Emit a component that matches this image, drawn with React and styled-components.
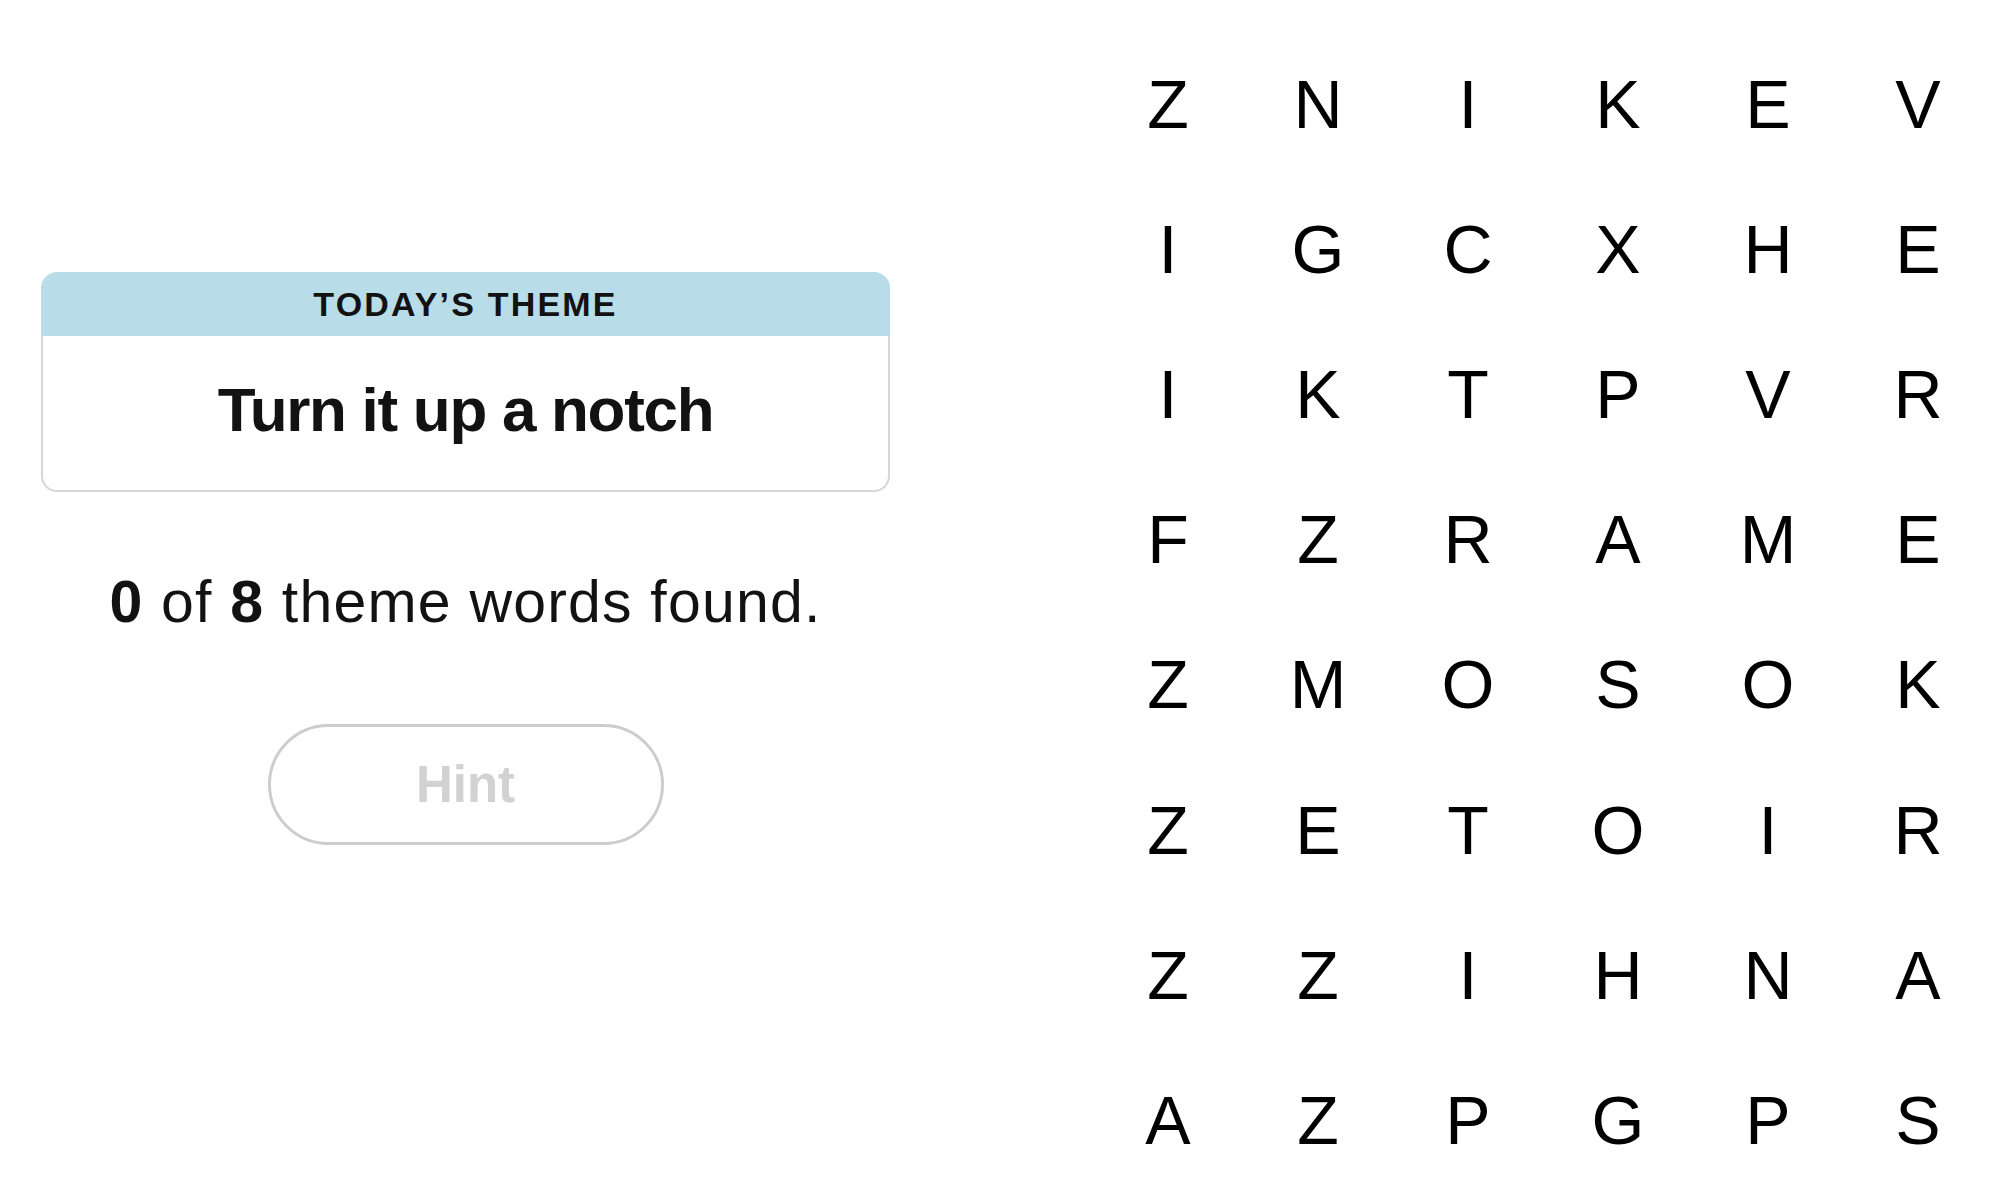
import React from "react";
import styled, { createGlobalStyle } from "styled-components";

const GlobalStyle = createGlobalStyle`
  html, body {
    margin: 0;
    padding: 0;
    background: #ffffff;
  }
  body {
    font-family: "Liberation Sans", Arial, sans-serif;
    color: #121212;
  }
`;

const LETTERS = [
  "ZNIKEV",
  "IGCXHE",
  "IKTPVR",
  "FZRAME",
  "ZMOSOK",
  "ZETOIR",
  "ZZIHNA",
  "AZPGPS",
];

export default function App() {
  return (
    <>
      <GlobalStyle />
      <Page>
        <Sidebar>
          <ThemeCard>
            <ThemeHeader>TODAY’S THEME</ThemeHeader>
            <ThemeBody>Turn it up a notch</ThemeBody>
          </ThemeCard>
          <Progress>
            <b>0</b> of <b>8</b> theme words found.
          </Progress>
          <HintButton disabled>Hint</HintButton>
        </Sidebar>
        <Board>
          {LETTERS.map((row, r) =>
            row.split("").map((ch, c) => <Cell key={`${r}-${c}`}>{ch}</Cell>)
          )}
        </Board>
      </Page>
    </>
  );
}

const Page = styled.div`
  display: flex;
  align-items: flex-start;
  gap: 203px;
  padding: 31px 0 0 41px;
  height: 1202px;
  box-sizing: border-box;
  overflow: hidden;
`;

const Sidebar = styled.div`
  width: 849px;
  padding-top: 241px;
  display: flex;
  flex-direction: column;
  align-items: center;
`;

const ThemeCard = styled.div`
  width: 100%;
  display: flex;
  flex-direction: column;
`;

const ThemeHeader = styled.div`
  height: 64px;
  background: #b8dce8;
  border-radius: 16px 16px 0 0;
  display: flex;
  align-items: center;
  justify-content: center;
  font-size: 34px;
  font-weight: 700;
  letter-spacing: 2.2px;
  line-height: 1;
  color: #121212;
`;

const ThemeBody = styled.div`
  height: 156px;
  box-sizing: border-box;
  border: 2px solid #d6d6d6;
  border-top: none;
  border-radius: 0 0 16px 16px;
  display: flex;
  align-items: center;
  justify-content: center;
  padding-bottom: 6px;
  font-size: 62px;
  font-weight: 700;
  letter-spacing: -1.3px;
  line-height: 1;
  color: #121212;
`;

const Progress = styled.p`
  margin: 81px 0 0;
  font-size: 59px;
  line-height: 59px;
  letter-spacing: 1.2px;
  font-weight: 400;
  color: #121212;
  white-space: nowrap;

  b {
    font-weight: 700;
  }
`;

const HintButton = styled.button`
  margin-top: 92px;
  width: 396px;
  height: 121px;
  border: 3px solid #cdcdcd;
  border-radius: 61px;
  background: #ffffff;
  font-family: "Liberation Sans", Arial, sans-serif;
  font-size: 51px;
  font-weight: 700;
  line-height: 1;
  color: #d2d2d2;
  cursor: default;
  display: flex;
  align-items: center;
  justify-content: center;
  padding: 0;
`;

const Board = styled.div`
  display: grid;
  grid-template-columns: repeat(6, 150px);
  grid-auto-rows: 145.2px;
`;

const Cell = styled.div`
  display: flex;
  align-items: center;
  justify-content: center;
  font-size: 68px;
  line-height: 1;
  font-weight: 400;
  color: #000000;
  user-select: none;
`;
